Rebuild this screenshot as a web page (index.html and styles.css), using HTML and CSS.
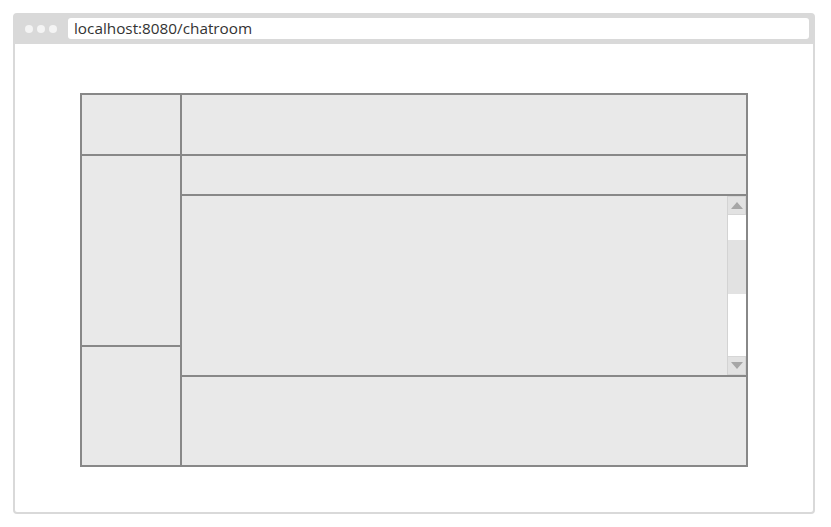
FILE: index.html
```html
<!DOCTYPE html>
<html>
<head>
<meta charset="utf-8">
<link rel="stylesheet" href="styles.css">
</head>
<body>
<div class="frame">
  <div class="topbar">
    <div class="dots"><span class="dot"></span><span class="dot"></span><span class="dot"></span></div>
    <div class="address">localhost:8080/chatroom</div>
  </div>
  <div class="content">
    <div class="layout">
      <div class="row-top">
        <div class="cell left-top"></div>
        <div class="cell right-top"></div>
      </div>
      <div class="row-bottom">
        <div class="col-left">
          <div class="cell left-mid"></div>
          <div class="cell left-bottom"></div>
        </div>
        <div class="col-right">
          <div class="cell right-head"></div>
          <div class="cell scroll-area">
            <div class="scroll-body"></div>
            <div class="scrollbar">
              <div class="sb-btn"><svg width="12" height="7" viewBox="0 0 12 7"><polygon points="6,0 12,7 0,7" fill="#a6a6a6"/></svg></div>
              <div class="sb-track">
                <div class="sb-gap"></div>
                <div class="sb-thumb"></div>
                <div class="sb-rest"></div>
              </div>
              <div class="sb-btn"><svg width="12" height="7" viewBox="0 0 12 7"><polygon points="0,0 12,0 6,7" fill="#a6a6a6"/></svg></div>
            </div>
          </div>
          <div class="cell right-bottom"></div>
        </div>
      </div>
    </div>
  </div>
</div>
</body>
</html>
```
FILE: styles.css
```css
* { box-sizing: border-box; }
html, body { margin: 0; padding: 0; background: #ffffff; }
body { padding: 13px 0 0 13px; font-family: "Open Sans", "Noto Sans", sans-serif; }

.frame {
  width: 802px;
  height: 501px;
  border: 2px solid #d9d9d9;
  border-radius: 4px;
  display: flex;
  flex-direction: column;
  background: #ffffff;
}
.topbar {
  height: 29px;
  background: #d9d9d9;
  display: flex;
  align-items: flex-start;
  padding: 3px 4px 0 10px;
}
.dots { display: flex; gap: 4px; width: 43px; padding-top: 7px; }
.dot { width: 8px; height: 8px; border-radius: 50%; background: #f4f4f4; }
.address {
  flex: 1;
  height: 21px;
  background: #ffffff;
  border-radius: 3px;
  padding-left: 6px;
  font-size: 15.3px;
  line-height: 21px;
  color: #333333;
}
.content { flex: 1; padding: 49px 65px 0 65px; }
.layout {
  width: 668px;
  height: 374px;
  background: #888888;
  padding: 2px;
  display: flex;
  flex-direction: column;
  gap: 2px;
}
.cell { background: #e9e9e9; }
.row-top { display: flex; gap: 2px; height: 59px; }
.left-top { width: 98px; }
.right-top { flex: 1; }
.row-bottom { display: flex; gap: 2px; flex: 1; }
.col-left { width: 98px; display: flex; flex-direction: column; gap: 2px; }
.left-mid { height: 189px; }
.left-bottom { flex: 1; }
.col-right { flex: 1; display: flex; flex-direction: column; gap: 2px; }
.right-head { height: 38px; }
.scroll-area { height: 179px; display: flex; }
.scroll-body { flex: 1; }
.scrollbar {
  width: 19px;
  border-left: 1px solid #d3d3d3;
  display: flex;
  flex-direction: column;
  background: #ffffff;
}
.sb-btn {
  height: 19px;
  background: #e2e2e2;
  border: 1px solid #d6d6d6;
  border-left: 0;
  display: flex;
  align-items: center;
  justify-content: center;
}
.sb-track { flex: 1; display: flex; flex-direction: column; }
.sb-gap { height: 25px; }
.sb-thumb { height: 54px; background: #e2e2e2; }
.sb-rest { flex: 1; }
.right-bottom { flex: 1; }
```
